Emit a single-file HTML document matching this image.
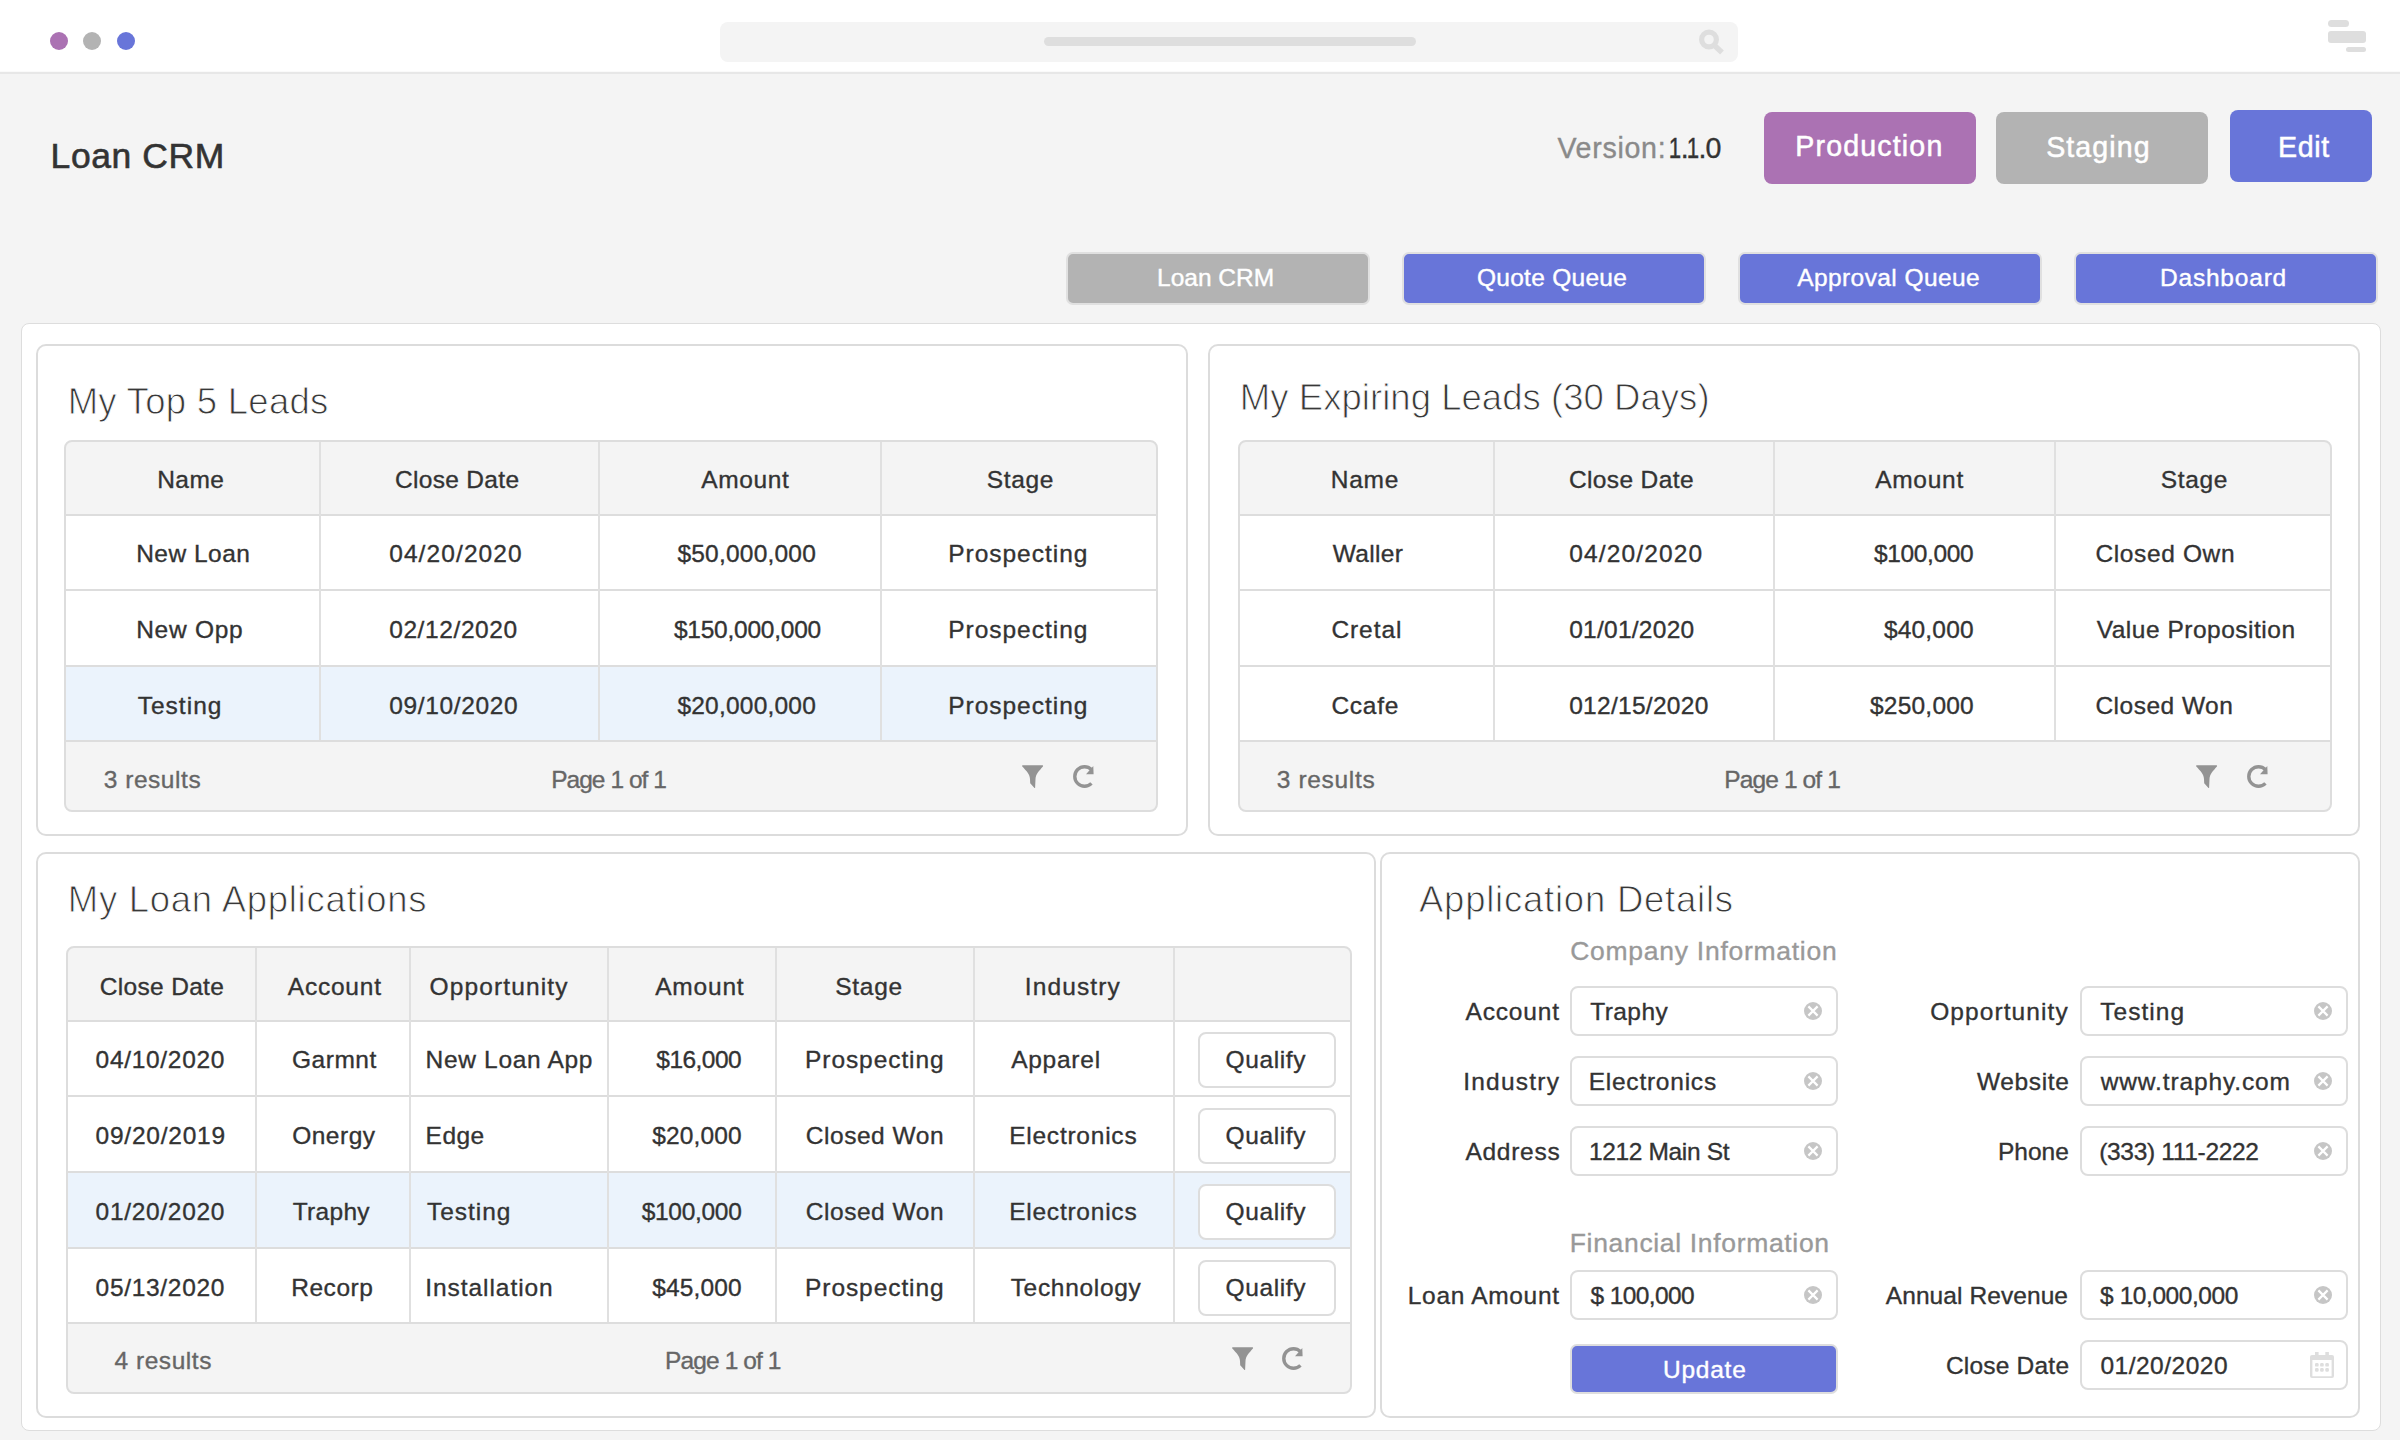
<!DOCTYPE html>
<html><head><meta charset="utf-8"><title>Loan CRM</title>
<style>
html,body{margin:0;padding:0;}
body{width:2400px;height:1440px;overflow:hidden;background:#f4f4f4;position:relative;font-family:"Liberation Sans",sans-serif;}
.t{position:absolute;white-space:nowrap;line-height:1;}
.r{position:absolute;display:block;}
</style></head><body>
<div class="r" style="left:0px;top:0px;width:2400px;height:71px;background:#ffffff;border-radius:0px;"></div>
<div class="r" style="left:0px;top:71px;width:2400px;height:1px;background:#fafafa;border-radius:0px;"></div>
<div class="r" style="left:0px;top:72px;width:2400px;height:2px;background:#e7e7e7;border-radius:0px;"></div>
<div class="r" style="left:50px;top:32px;width:18px;height:18px;border-radius:50%;background:#ab72b3"></div>
<div class="r" style="left:83.4px;top:32px;width:18px;height:18px;border-radius:50%;background:#b3b3b3"></div>
<div class="r" style="left:117px;top:32px;width:18px;height:18px;border-radius:50%;background:#6875d9"></div>
<div class="r" style="left:720px;top:22px;width:1018px;height:40px;background:#f4f4f4;border-radius:8px;"></div>
<div class="r" style="left:1044px;top:37px;width:372px;height:9px;background:#dedede;border-radius:5px;"></div>
<svg class="r" style="left:1690px;top:22px" width="40" height="40" viewBox="0 0 40 40"><circle cx="19" cy="17.5" r="7.4" fill="none" stroke="#dedede" stroke-width="5.2"/><line x1="24.5" y1="23.5" x2="32" y2="30.5" stroke="#dedede" stroke-width="5.5"/></svg>
<div class="r" style="left:2328px;top:20px;width:21px;height:7px;background:#dedede;border-radius:3.5px;"></div>
<div class="r" style="left:2328px;top:31px;width:38px;height:12px;background:#dedede;border-radius:3px;"></div>
<div class="r" style="left:2346px;top:47px;width:20px;height:5px;background:#dedede;border-radius:2.5px;"></div>
<div class="t" style="left:50.55px;top:139px;font-size:35.5px;letter-spacing:0.586px;color:#333333;-webkit-text-stroke:0.6px #333333;">Loan CRM</div>
<div class="t" style="left:1557.42px;top:134px;font-size:28.6px;letter-spacing:0.707px;color:#8a8a8a;-webkit-text-stroke:0.35px #8a8a8a;">Version:</div>
<div class="t" style="left:1667.17px;top:134px;font-size:28.6px;letter-spacing:0.000px;color:#333333;-webkit-text-stroke:0.35px #333333;transform:scaleX(0.78);transform-origin:50% 50%;">1</div>
<div class="t" style="left:1680.82px;top:134px;font-size:28.6px;letter-spacing:0.000px;color:#333333;-webkit-text-stroke:0.35px #333333;">.</div>
<div class="t" style="left:1685.17px;top:134px;font-size:28.6px;letter-spacing:0.000px;color:#333333;-webkit-text-stroke:0.35px #333333;transform:scaleX(0.78);transform-origin:50% 50%;">1</div>
<div class="t" style="left:1698.52px;top:134px;font-size:28.6px;letter-spacing:0.000px;color:#333333;-webkit-text-stroke:0.35px #333333;">.</div>
<div class="t" style="left:1705.55px;top:134px;font-size:28.6px;letter-spacing:0.000px;color:#333333;-webkit-text-stroke:0.35px #333333;">0</div>
<div class="r" style="left:1764px;top:112px;width:212px;height:72px;background:#ab72b3;border-radius:8px;"></div>
<div class="t" style="left:1795.35px;top:132px;font-size:28.6px;letter-spacing:1.139px;color:#ffffff;-webkit-text-stroke:0.5px #ffffff;">Production</div>
<div class="r" style="left:1996px;top:112px;width:212px;height:72px;background:#b3b3b3;border-radius:8px;"></div>
<div class="t" style="left:2046.25px;top:133px;font-size:28.6px;letter-spacing:1.050px;color:#ffffff;-webkit-text-stroke:0.5px #ffffff;">Staging</div>
<div class="r" style="left:2230px;top:110px;width:142px;height:72px;background:#6875d9;border-radius:8px;"></div>
<div class="t" style="left:2278.05px;top:133px;font-size:28.6px;letter-spacing:0.650px;color:#ffffff;-webkit-text-stroke:0.5px #ffffff;">Edit</div>
<div class="r" style="left:1066px;top:252px;width:304px;height:53px;background:#b3b3b3;border:2px solid #e0e0e0;box-sizing:border-box;border-radius:7px;"></div>
<div class="t" style="left:1157.00px;top:266px;font-size:24.5px;letter-spacing:0.007px;color:#ffffff;-webkit-text-stroke:0.4px #ffffff;">Loan CRM</div>
<div class="r" style="left:1402px;top:252px;width:304px;height:53px;background:#6875d9;border:2px solid #e0e0e0;box-sizing:border-box;border-radius:7px;"></div>
<div class="t" style="left:1476.90px;top:266px;font-size:24.5px;letter-spacing:0.290px;color:#ffffff;-webkit-text-stroke:0.4px #ffffff;">Quote Queue</div>
<div class="r" style="left:1738px;top:252px;width:304px;height:53px;background:#6875d9;border:2px solid #e0e0e0;box-sizing:border-box;border-radius:7px;"></div>
<div class="t" style="left:1797.20px;top:266px;font-size:24.5px;letter-spacing:0.415px;color:#ffffff;-webkit-text-stroke:0.4px #ffffff;">Approval Queue</div>
<div class="r" style="left:2074px;top:252px;width:304px;height:53px;background:#6875d9;border:2px solid #e0e0e0;box-sizing:border-box;border-radius:7px;"></div>
<div class="t" style="left:2160.00px;top:266px;font-size:24.5px;letter-spacing:0.794px;color:#ffffff;-webkit-text-stroke:0.4px #ffffff;">Dashboard</div>
<div class="r" style="left:21px;top:323px;width:2360px;height:1108px;background:#ffffff;border:1px solid #dddddd;box-sizing:border-box;border-radius:8px;"></div>
<div class="r" style="left:36px;top:344px;width:1152px;height:492px;background:#ffffff;border:2px solid #dcdcdc;box-sizing:border-box;border-radius:10px;"></div>
<div class="r" style="left:1208px;top:344px;width:1152px;height:492px;background:#ffffff;border:2px solid #dcdcdc;box-sizing:border-box;border-radius:10px;"></div>
<div class="r" style="left:36px;top:852px;width:1340px;height:566px;background:#ffffff;border:2px solid #dcdcdc;box-sizing:border-box;border-radius:10px;"></div>
<div class="r" style="left:1380px;top:852px;width:980px;height:566px;background:#ffffff;border:2px solid #dcdcdc;box-sizing:border-box;border-radius:10px;"></div>
<div class="r" style="left:64px;top:440px;width:1094px;height:372px;background:#f4f4f4;border:2px solid #dddddd;box-sizing:border-box;border-radius:8px;"></div>
<div class="r" style="left:66px;top:515px;width:1090px;height:75px;background:#ffffff;border-radius:0px;"></div>
<div class="r" style="left:66px;top:590px;width:1090px;height:76px;background:#ffffff;border-radius:0px;"></div>
<div class="r" style="left:66px;top:666px;width:1090px;height:75px;background:#ebf3fc;border-radius:0px;"></div>
<div class="r" style="left:66px;top:514px;width:1090px;height:2px;background:#dddddd;border-radius:0px;"></div>
<div class="r" style="left:66px;top:589px;width:1090px;height:2px;background:#dddddd;border-radius:0px;"></div>
<div class="r" style="left:66px;top:665px;width:1090px;height:2px;background:#dddddd;border-radius:0px;"></div>
<div class="r" style="left:66px;top:740px;width:1090px;height:2px;background:#dddddd;border-radius:0px;"></div>
<div class="r" style="left:319px;top:442px;width:2px;height:298px;background:#e0e0e0;border-radius:0px;"></div>
<div class="r" style="left:598px;top:442px;width:2px;height:298px;background:#e0e0e0;border-radius:0px;"></div>
<div class="r" style="left:880px;top:442px;width:2px;height:298px;background:#e0e0e0;border-radius:0px;"></div>
<div class="r" style="left:1238px;top:440px;width:1094px;height:372px;background:#f4f4f4;border:2px solid #dddddd;box-sizing:border-box;border-radius:8px;"></div>
<div class="r" style="left:1240px;top:515px;width:1090px;height:75px;background:#ffffff;border-radius:0px;"></div>
<div class="r" style="left:1240px;top:590px;width:1090px;height:76px;background:#ffffff;border-radius:0px;"></div>
<div class="r" style="left:1240px;top:666px;width:1090px;height:75px;background:#ffffff;border-radius:0px;"></div>
<div class="r" style="left:1240px;top:514px;width:1090px;height:2px;background:#dddddd;border-radius:0px;"></div>
<div class="r" style="left:1240px;top:589px;width:1090px;height:2px;background:#dddddd;border-radius:0px;"></div>
<div class="r" style="left:1240px;top:665px;width:1090px;height:2px;background:#dddddd;border-radius:0px;"></div>
<div class="r" style="left:1240px;top:740px;width:1090px;height:2px;background:#dddddd;border-radius:0px;"></div>
<div class="r" style="left:1493px;top:442px;width:2px;height:298px;background:#e0e0e0;border-radius:0px;"></div>
<div class="r" style="left:1773px;top:442px;width:2px;height:298px;background:#e0e0e0;border-radius:0px;"></div>
<div class="r" style="left:2054px;top:442px;width:2px;height:298px;background:#e0e0e0;border-radius:0px;"></div>
<div class="r" style="left:66px;top:946px;width:1286px;height:448px;background:#f4f4f4;border:2px solid #dddddd;box-sizing:border-box;border-radius:8px;"></div>
<div class="r" style="left:68px;top:1021px;width:1282px;height:75px;background:#ffffff;border-radius:0px;"></div>
<div class="r" style="left:68px;top:1096px;width:1282px;height:76px;background:#ffffff;border-radius:0px;"></div>
<div class="r" style="left:68px;top:1172px;width:1282px;height:76px;background:#ebf3fc;border-radius:0px;"></div>
<div class="r" style="left:68px;top:1248px;width:1282px;height:75px;background:#ffffff;border-radius:0px;"></div>
<div class="r" style="left:68px;top:1020px;width:1282px;height:2px;background:#dddddd;border-radius:0px;"></div>
<div class="r" style="left:68px;top:1095px;width:1282px;height:2px;background:#dddddd;border-radius:0px;"></div>
<div class="r" style="left:68px;top:1171px;width:1282px;height:2px;background:#dddddd;border-radius:0px;"></div>
<div class="r" style="left:68px;top:1247px;width:1282px;height:2px;background:#dddddd;border-radius:0px;"></div>
<div class="r" style="left:68px;top:1322px;width:1282px;height:2px;background:#dddddd;border-radius:0px;"></div>
<div class="r" style="left:255px;top:948px;width:2px;height:374px;background:#e0e0e0;border-radius:0px;"></div>
<div class="r" style="left:409px;top:948px;width:2px;height:374px;background:#e0e0e0;border-radius:0px;"></div>
<div class="r" style="left:607px;top:948px;width:2px;height:374px;background:#e0e0e0;border-radius:0px;"></div>
<div class="r" style="left:775px;top:948px;width:2px;height:374px;background:#e0e0e0;border-radius:0px;"></div>
<div class="r" style="left:973px;top:948px;width:2px;height:374px;background:#e0e0e0;border-radius:0px;"></div>
<div class="r" style="left:1173px;top:948px;width:2px;height:374px;background:#e0e0e0;border-radius:0px;"></div>
<div class="t" style="left:67.65px;top:384px;font-size:36.5px;letter-spacing:0.281px;color:#383838;-webkit-text-stroke:0.9px #ffffff;">My Top 5 Leads</div>
<div class="t" style="left:1239.85px;top:380px;font-size:36.5px;letter-spacing:0.042px;color:#383838;-webkit-text-stroke:0.9px #ffffff;">My Expiring Leads (30 Days)</div>
<div class="t" style="left:67.80px;top:882px;font-size:36.5px;letter-spacing:0.721px;color:#383838;-webkit-text-stroke:0.9px #ffffff;">My Loan Applications</div>
<div class="t" style="left:1418.95px;top:882px;font-size:36.5px;letter-spacing:0.772px;color:#383838;-webkit-text-stroke:0.9px #ffffff;">Application Details</div>
<div class="t" style="left:157.18px;top:468px;font-size:24.5px;letter-spacing:0.467px;color:#333333;-webkit-text-stroke:0.35px #333333;">Name</div>
<div class="t" style="left:394.93px;top:468px;font-size:24.5px;letter-spacing:0.322px;color:#333333;-webkit-text-stroke:0.35px #333333;">Close Date</div>
<div class="t" style="left:701.17px;top:468px;font-size:24.5px;letter-spacing:0.630px;color:#333333;-webkit-text-stroke:0.35px #333333;">Amount</div>
<div class="t" style="left:986.67px;top:468px;font-size:24.5px;letter-spacing:0.662px;color:#333333;-webkit-text-stroke:0.35px #333333;">Stage</div>
<div class="t" style="left:136.18px;top:542px;font-size:24.5px;letter-spacing:0.486px;color:#333333;-webkit-text-stroke:0.35px #333333;">New Loan</div>
<div class="t" style="left:389.18px;top:542px;font-size:24.5px;letter-spacing:1.100px;color:#333333;-webkit-text-stroke:0.35px #333333;">04/20/2020</div>
<div class="t" style="left:677.42px;top:542px;font-size:24.5px;letter-spacing:0.215px;color:#333333;-webkit-text-stroke:0.35px #333333;">$50,000,000</div>
<div class="t" style="left:948.17px;top:542px;font-size:24.5px;letter-spacing:0.990px;color:#333333;-webkit-text-stroke:0.35px #333333;">Prospecting</div>
<div class="t" style="left:136.18px;top:618px;font-size:24.5px;letter-spacing:0.733px;color:#333333;-webkit-text-stroke:0.35px #333333;">New Opp</div>
<div class="t" style="left:389.18px;top:618px;font-size:24.5px;letter-spacing:0.600px;color:#333333;-webkit-text-stroke:0.35px #333333;">02/12/2020</div>
<div class="t" style="left:673.92px;top:618px;font-size:24.5px;letter-spacing:-0.236px;color:#333333;-webkit-text-stroke:0.35px #333333;">$150,000,000</div>
<div class="t" style="left:948.17px;top:618px;font-size:24.5px;letter-spacing:0.990px;color:#333333;-webkit-text-stroke:0.35px #333333;">Prospecting</div>
<div class="t" style="left:137.68px;top:694px;font-size:24.5px;letter-spacing:1.025px;color:#333333;-webkit-text-stroke:0.35px #333333;">Testing</div>
<div class="t" style="left:389.18px;top:694px;font-size:24.5px;letter-spacing:0.656px;color:#333333;-webkit-text-stroke:0.35px #333333;">09/10/2020</div>
<div class="t" style="left:677.42px;top:694px;font-size:24.5px;letter-spacing:0.215px;color:#333333;-webkit-text-stroke:0.35px #333333;">$20,000,000</div>
<div class="t" style="left:948.17px;top:694px;font-size:24.5px;letter-spacing:0.990px;color:#333333;-webkit-text-stroke:0.35px #333333;">Prospecting</div>
<div class="t" style="left:103.67px;top:768px;font-size:24.5px;letter-spacing:0.550px;color:#666666;-webkit-text-stroke:0.35px #666666;">3 results</div>
<div class="t" style="left:551.17px;top:768px;font-size:24.5px;letter-spacing:-0.960px;color:#666666;-webkit-text-stroke:0.35px #666666;">Page 1 of 1</div>
<div class="t" style="left:1330.67px;top:468px;font-size:24.5px;letter-spacing:0.800px;color:#333333;-webkit-text-stroke:0.35px #333333;">Name</div>
<div class="t" style="left:1568.92px;top:468px;font-size:24.5px;letter-spacing:0.378px;color:#333333;-webkit-text-stroke:0.35px #333333;">Close Date</div>
<div class="t" style="left:1875.17px;top:468px;font-size:24.5px;letter-spacing:0.730px;color:#333333;-webkit-text-stroke:0.35px #333333;">Amount</div>
<div class="t" style="left:2160.68px;top:468px;font-size:24.5px;letter-spacing:0.662px;color:#333333;-webkit-text-stroke:0.35px #333333;">Stage</div>
<div class="t" style="left:1332.67px;top:542px;font-size:24.5px;letter-spacing:0.330px;color:#333333;-webkit-text-stroke:0.35px #333333;">Waller</div>
<div class="t" style="left:1569.17px;top:542px;font-size:24.5px;letter-spacing:1.156px;color:#333333;-webkit-text-stroke:0.35px #333333;">04/20/2020</div>
<div class="t" style="left:1873.92px;top:542px;font-size:24.5px;letter-spacing:-0.336px;color:#333333;-webkit-text-stroke:0.35px #333333;">$100,000</div>
<div class="t" style="left:2095.43px;top:542px;font-size:24.5px;letter-spacing:0.628px;color:#333333;-webkit-text-stroke:0.35px #333333;">Closed Own</div>
<div class="t" style="left:1331.42px;top:618px;font-size:24.5px;letter-spacing:0.930px;color:#333333;-webkit-text-stroke:0.35px #333333;">Cretal</div>
<div class="t" style="left:1569.17px;top:618px;font-size:24.5px;letter-spacing:0.267px;color:#333333;-webkit-text-stroke:0.35px #333333;">01/01/2020</div>
<div class="t" style="left:1883.92px;top:618px;font-size:24.5px;letter-spacing:0.192px;color:#333333;-webkit-text-stroke:0.35px #333333;">$40,000</div>
<div class="t" style="left:2096.68px;top:618px;font-size:24.5px;letter-spacing:0.509px;color:#333333;-webkit-text-stroke:0.35px #333333;">Value Proposition</div>
<div class="t" style="left:1331.42px;top:694px;font-size:24.5px;letter-spacing:0.725px;color:#333333;-webkit-text-stroke:0.35px #333333;">Ccafe</div>
<div class="t" style="left:1569.17px;top:694px;font-size:24.5px;letter-spacing:0.290px;color:#333333;-webkit-text-stroke:0.35px #333333;">012/15/2020</div>
<div class="t" style="left:1869.92px;top:694px;font-size:24.5px;letter-spacing:0.236px;color:#333333;-webkit-text-stroke:0.35px #333333;">$250,000</div>
<div class="t" style="left:2095.43px;top:694px;font-size:24.5px;letter-spacing:0.489px;color:#333333;-webkit-text-stroke:0.35px #333333;">Closed Won</div>
<div class="t" style="left:1276.67px;top:768px;font-size:24.5px;letter-spacing:0.675px;color:#666666;-webkit-text-stroke:0.35px #666666;">3 results</div>
<div class="t" style="left:1724.17px;top:768px;font-size:24.5px;letter-spacing:-0.860px;color:#666666;-webkit-text-stroke:0.35px #666666;">Page 1 of 1</div>
<div class="t" style="left:99.83px;top:975px;font-size:24.5px;letter-spacing:0.311px;color:#333333;-webkit-text-stroke:0.35px #333333;">Close Date</div>
<div class="t" style="left:287.78px;top:975px;font-size:24.5px;letter-spacing:0.775px;color:#333333;-webkit-text-stroke:0.35px #333333;">Account</div>
<div class="t" style="left:429.57px;top:975px;font-size:24.5px;letter-spacing:1.130px;color:#333333;-webkit-text-stroke:0.35px #333333;">Opportunity</div>
<div class="t" style="left:655.17px;top:975px;font-size:24.5px;letter-spacing:0.810px;color:#333333;-webkit-text-stroke:0.35px #333333;">Amount</div>
<div class="t" style="left:835.17px;top:975px;font-size:24.5px;letter-spacing:0.762px;color:#333333;-webkit-text-stroke:0.35px #333333;">Stage</div>
<div class="t" style="left:1024.72px;top:975px;font-size:24.5px;letter-spacing:1.121px;color:#333333;-webkit-text-stroke:0.35px #333333;">Industry</div>
<div class="t" style="left:95.58px;top:1048px;font-size:24.5px;letter-spacing:0.689px;color:#333333;-webkit-text-stroke:0.35px #333333;">04/10/2020</div>
<div class="t" style="left:291.93px;top:1048px;font-size:24.5px;letter-spacing:0.550px;color:#333333;-webkit-text-stroke:0.35px #333333;">Garmnt</div>
<div class="t" style="left:425.57px;top:1048px;font-size:24.5px;letter-spacing:0.677px;color:#333333;-webkit-text-stroke:0.35px #333333;">New Loan App</div>
<div class="t" style="left:656.32px;top:1048px;font-size:24.5px;letter-spacing:-0.542px;color:#333333;-webkit-text-stroke:0.35px #333333;">$16,000</div>
<div class="t" style="left:805.07px;top:1048px;font-size:24.5px;letter-spacing:0.920px;color:#333333;-webkit-text-stroke:0.35px #333333;">Prospecting</div>
<div class="t" style="left:1011.17px;top:1048px;font-size:24.5px;letter-spacing:0.750px;color:#333333;-webkit-text-stroke:0.35px #333333;">Apparel</div>
<div class="r" style="left:1198px;top:1032px;width:138px;height:56px;background:#ffffff;border:2px solid #dddddd;box-sizing:border-box;border-radius:8px;"></div>
<div class="t" style="left:1225.58px;top:1048px;font-size:24.5px;letter-spacing:0.617px;color:#333333;-webkit-text-stroke:0.35px #333333;">Qualify</div>
<div class="t" style="left:95.58px;top:1124px;font-size:24.5px;letter-spacing:0.772px;color:#333333;-webkit-text-stroke:0.35px #333333;">09/20/2019</div>
<div class="t" style="left:292.18px;top:1124px;font-size:24.5px;letter-spacing:0.500px;color:#333333;-webkit-text-stroke:0.35px #333333;">Onergy</div>
<div class="t" style="left:425.57px;top:1124px;font-size:24.5px;letter-spacing:0.483px;color:#333333;-webkit-text-stroke:0.35px #333333;">Edge</div>
<div class="t" style="left:652.22px;top:1124px;font-size:24.5px;letter-spacing:0.142px;color:#333333;-webkit-text-stroke:0.35px #333333;">$20,000</div>
<div class="t" style="left:805.82px;top:1124px;font-size:24.5px;letter-spacing:0.522px;color:#333333;-webkit-text-stroke:0.35px #333333;">Closed Won</div>
<div class="t" style="left:1009.17px;top:1124px;font-size:24.5px;letter-spacing:0.765px;color:#333333;-webkit-text-stroke:0.35px #333333;">Electronics</div>
<div class="r" style="left:1198px;top:1108px;width:138px;height:56px;background:#ffffff;border:2px solid #dddddd;box-sizing:border-box;border-radius:8px;"></div>
<div class="t" style="left:1225.58px;top:1124px;font-size:24.5px;letter-spacing:0.617px;color:#333333;-webkit-text-stroke:0.35px #333333;">Qualify</div>
<div class="t" style="left:95.58px;top:1200px;font-size:24.5px;letter-spacing:0.689px;color:#333333;-webkit-text-stroke:0.35px #333333;">01/20/2020</div>
<div class="t" style="left:292.68px;top:1200px;font-size:24.5px;letter-spacing:0.320px;color:#333333;-webkit-text-stroke:0.35px #333333;">Traphy</div>
<div class="t" style="left:427.07px;top:1200px;font-size:24.5px;letter-spacing:0.942px;color:#333333;-webkit-text-stroke:0.35px #333333;">Testing</div>
<div class="t" style="left:641.72px;top:1200px;font-size:24.5px;letter-spacing:-0.307px;color:#333333;-webkit-text-stroke:0.35px #333333;">$100,000</div>
<div class="t" style="left:805.82px;top:1200px;font-size:24.5px;letter-spacing:0.522px;color:#333333;-webkit-text-stroke:0.35px #333333;">Closed Won</div>
<div class="t" style="left:1009.17px;top:1200px;font-size:24.5px;letter-spacing:0.765px;color:#333333;-webkit-text-stroke:0.35px #333333;">Electronics</div>
<div class="r" style="left:1198px;top:1184px;width:138px;height:56px;background:#ffffff;border:2px solid #dddddd;box-sizing:border-box;border-radius:8px;"></div>
<div class="t" style="left:1225.58px;top:1200px;font-size:24.5px;letter-spacing:0.617px;color:#333333;-webkit-text-stroke:0.35px #333333;">Qualify</div>
<div class="t" style="left:95.58px;top:1276px;font-size:24.5px;letter-spacing:0.689px;color:#333333;-webkit-text-stroke:0.35px #333333;">05/13/2020</div>
<div class="t" style="left:291.18px;top:1276px;font-size:24.5px;letter-spacing:0.550px;color:#333333;-webkit-text-stroke:0.35px #333333;">Recorp</div>
<div class="t" style="left:425.32px;top:1276px;font-size:24.5px;letter-spacing:0.936px;color:#333333;-webkit-text-stroke:0.35px #333333;">Installation</div>
<div class="t" style="left:652.22px;top:1276px;font-size:24.5px;letter-spacing:0.142px;color:#333333;-webkit-text-stroke:0.35px #333333;">$45,000</div>
<div class="t" style="left:805.07px;top:1276px;font-size:24.5px;letter-spacing:0.920px;color:#333333;-webkit-text-stroke:0.35px #333333;">Prospecting</div>
<div class="t" style="left:1010.67px;top:1276px;font-size:24.5px;letter-spacing:0.683px;color:#333333;-webkit-text-stroke:0.35px #333333;">Technology</div>
<div class="r" style="left:1198px;top:1260px;width:138px;height:56px;background:#ffffff;border:2px solid #dddddd;box-sizing:border-box;border-radius:8px;"></div>
<div class="t" style="left:1225.58px;top:1276px;font-size:24.5px;letter-spacing:0.617px;color:#333333;-webkit-text-stroke:0.35px #333333;">Qualify</div>
<div class="t" style="left:114.38px;top:1349px;font-size:24.5px;letter-spacing:0.563px;color:#666666;-webkit-text-stroke:0.35px #666666;">4 results</div>
<div class="t" style="left:665.07px;top:1349px;font-size:24.5px;letter-spacing:-0.890px;color:#666666;-webkit-text-stroke:0.35px #666666;">Page 1 of 1</div>
<svg class="r" style="left:1022px;top:765px" width="22" height="24" viewBox="0 0 22 24"><path d="M0.6 0.3H20.6Q21.4 0.6 20.9 1.5C17.2 6 13.7 9 13.5 14L13.1 23H12.5L8.2 18.2L8 14C7.8 9 4.3 6 0.3 1.5Q-0.2 0.6 0.6 0.3Z" fill="#939393"/></svg>
<svg class="r" style="left:1073px;top:765px" width="22" height="24" viewBox="0 0 22 24"><path d="M18.44 18.34A9.75 9.75 0 1 1 18.44 4.56" fill="none" stroke="#939393" stroke-width="3.4"/><path d="M20.3 1L20.6 9.3L13 9.3Z" fill="#939393"/></svg>
<svg class="r" style="left:2196px;top:765px" width="22" height="24" viewBox="0 0 22 24"><path d="M0.6 0.3H20.6Q21.4 0.6 20.9 1.5C17.2 6 13.7 9 13.5 14L13.1 23H12.5L8.2 18.2L8 14C7.8 9 4.3 6 0.3 1.5Q-0.2 0.6 0.6 0.3Z" fill="#939393"/></svg>
<svg class="r" style="left:2247px;top:765px" width="22" height="24" viewBox="0 0 22 24"><path d="M18.44 18.34A9.75 9.75 0 1 1 18.44 4.56" fill="none" stroke="#939393" stroke-width="3.4"/><path d="M20.3 1L20.6 9.3L13 9.3Z" fill="#939393"/></svg>
<svg class="r" style="left:1232px;top:1347px" width="22" height="24" viewBox="0 0 22 24"><path d="M0.6 0.3H20.6Q21.4 0.6 20.9 1.5C17.2 6 13.7 9 13.5 14L13.1 23H12.5L8.2 18.2L8 14C7.8 9 4.3 6 0.3 1.5Q-0.2 0.6 0.6 0.3Z" fill="#939393"/></svg>
<svg class="r" style="left:1282px;top:1347px" width="22" height="24" viewBox="0 0 22 24"><path d="M18.44 18.34A9.75 9.75 0 1 1 18.44 4.56" fill="none" stroke="#939393" stroke-width="3.4"/><path d="M20.3 1L20.6 9.3L13 9.3Z" fill="#939393"/></svg>
<div class="t" style="left:1570.22px;top:938px;font-size:26.5px;letter-spacing:0.728px;color:#999999;-webkit-text-stroke:0.35px #999999;">Company Information</div>
<div class="t" style="left:1569.77px;top:1230px;font-size:26.5px;letter-spacing:0.665px;color:#999999;-webkit-text-stroke:0.35px #999999;">Financial Information</div>
<div class="t" style="left:1465.47px;top:1000px;font-size:24.5px;letter-spacing:0.842px;color:#333333;-webkit-text-stroke:0.35px #333333;">Account</div>
<div class="r" style="left:1570px;top:986px;width:268px;height:50px;background:#ffffff;border:2px solid #dddddd;box-sizing:border-box;border-radius:8px;"></div>
<div class="t" style="left:1590.17px;top:1000px;font-size:24.5px;letter-spacing:0.440px;color:#333333;-webkit-text-stroke:0.35px #333333;">Traphy</div>
<svg class="r" style="left:1803px;top:1001.0px" width="20" height="20" viewBox="0 0 20 20"><circle cx="10" cy="10" r="9" fill="#c6c6c6"/><path d="M5.4 5.4L14.6 14.6M14.6 5.4L5.4 14.6" stroke="#ffffff" stroke-width="2.2"/></svg>
<div class="t" style="left:1930.17px;top:1000px;font-size:24.5px;letter-spacing:1.090px;color:#333333;-webkit-text-stroke:0.35px #333333;">Opportunity</div>
<div class="r" style="left:2080px;top:986px;width:268px;height:50px;background:#ffffff;border:2px solid #dddddd;box-sizing:border-box;border-radius:8px;"></div>
<div class="t" style="left:2100.18px;top:1000px;font-size:24.5px;letter-spacing:1.058px;color:#333333;-webkit-text-stroke:0.35px #333333;">Testing</div>
<svg class="r" style="left:2313px;top:1001.0px" width="20" height="20" viewBox="0 0 20 20"><circle cx="10" cy="10" r="9" fill="#c6c6c6"/><path d="M5.4 5.4L14.6 14.6M14.6 5.4L5.4 14.6" stroke="#ffffff" stroke-width="2.2"/></svg>
<div class="t" style="left:1463.22px;top:1070px;font-size:24.5px;letter-spacing:1.221px;color:#333333;-webkit-text-stroke:0.35px #333333;">Industry</div>
<div class="r" style="left:1570px;top:1056px;width:268px;height:50px;background:#ffffff;border:2px solid #dddddd;box-sizing:border-box;border-radius:8px;"></div>
<div class="t" style="left:1588.67px;top:1070px;font-size:24.5px;letter-spacing:0.765px;color:#333333;-webkit-text-stroke:0.35px #333333;">Electronics</div>
<svg class="r" style="left:1803px;top:1071.0px" width="20" height="20" viewBox="0 0 20 20"><circle cx="10" cy="10" r="9" fill="#c6c6c6"/><path d="M5.4 5.4L14.6 14.6M14.6 5.4L5.4 14.6" stroke="#ffffff" stroke-width="2.2"/></svg>
<div class="t" style="left:1976.88px;top:1070px;font-size:24.5px;letter-spacing:0.658px;color:#333333;-webkit-text-stroke:0.35px #333333;">Website</div>
<div class="r" style="left:2080px;top:1056px;width:268px;height:50px;background:#ffffff;border:2px solid #dddddd;box-sizing:border-box;border-radius:8px;"></div>
<div class="t" style="left:2100.68px;top:1070px;font-size:24.5px;letter-spacing:0.877px;color:#333333;-webkit-text-stroke:0.35px #333333;">www.traphy.com</div>
<svg class="r" style="left:2313px;top:1071.0px" width="20" height="20" viewBox="0 0 20 20"><circle cx="10" cy="10" r="9" fill="#c6c6c6"/><path d="M5.4 5.4L14.6 14.6M14.6 5.4L5.4 14.6" stroke="#ffffff" stroke-width="2.2"/></svg>
<div class="t" style="left:1465.47px;top:1140px;font-size:24.5px;letter-spacing:0.717px;color:#333333;-webkit-text-stroke:0.35px #333333;">Address</div>
<div class="r" style="left:1570px;top:1126px;width:268px;height:50px;background:#ffffff;border:2px solid #dddddd;box-sizing:border-box;border-radius:8px;"></div>
<div class="t" style="left:1588.92px;top:1140px;font-size:24.5px;letter-spacing:-0.341px;color:#333333;-webkit-text-stroke:0.35px #333333;">1212 Main St</div>
<svg class="r" style="left:1803px;top:1141.0px" width="20" height="20" viewBox="0 0 20 20"><circle cx="10" cy="10" r="9" fill="#c6c6c6"/><path d="M5.4 5.4L14.6 14.6M14.6 5.4L5.4 14.6" stroke="#ffffff" stroke-width="2.2"/></svg>
<div class="t" style="left:1997.88px;top:1140px;font-size:24.5px;letter-spacing:0.050px;color:#333333;-webkit-text-stroke:0.35px #333333;">Phone</div>
<div class="r" style="left:2080px;top:1126px;width:268px;height:50px;background:#ffffff;border:2px solid #dddddd;box-sizing:border-box;border-radius:8px;"></div>
<div class="t" style="left:2099.18px;top:1140px;font-size:24.5px;letter-spacing:-0.315px;color:#333333;-webkit-text-stroke:0.35px #333333;">(333) 111-2222</div>
<svg class="r" style="left:2313px;top:1141.0px" width="20" height="20" viewBox="0 0 20 20"><circle cx="10" cy="10" r="9" fill="#c6c6c6"/><path d="M5.4 5.4L14.6 14.6M14.6 5.4L5.4 14.6" stroke="#ffffff" stroke-width="2.2"/></svg>
<div class="t" style="left:1407.77px;top:1284px;font-size:24.5px;letter-spacing:0.690px;color:#333333;-webkit-text-stroke:0.35px #333333;">Loan Amount</div>
<div class="r" style="left:1570px;top:1270px;width:268px;height:50px;background:#ffffff;border:2px solid #dddddd;box-sizing:border-box;border-radius:8px;"></div>
<div class="t" style="left:1590.62px;top:1284px;font-size:24.5px;letter-spacing:-0.625px;color:#333333;-webkit-text-stroke:0.35px #333333;">$ 100,000</div>
<svg class="r" style="left:1803px;top:1285.0px" width="20" height="20" viewBox="0 0 20 20"><circle cx="10" cy="10" r="9" fill="#c6c6c6"/><path d="M5.4 5.4L14.6 14.6M14.6 5.4L5.4 14.6" stroke="#ffffff" stroke-width="2.2"/></svg>
<div class="t" style="left:1885.77px;top:1284px;font-size:24.5px;letter-spacing:0.081px;color:#333333;-webkit-text-stroke:0.35px #333333;">Annual Revenue</div>
<div class="r" style="left:2080px;top:1270px;width:268px;height:50px;background:#ffffff;border:2px solid #dddddd;box-sizing:border-box;border-radius:8px;"></div>
<div class="t" style="left:2100.12px;top:1284px;font-size:24.5px;letter-spacing:-0.441px;color:#333333;-webkit-text-stroke:0.35px #333333;">$ 10,000,000</div>
<svg class="r" style="left:2313px;top:1285.0px" width="20" height="20" viewBox="0 0 20 20"><circle cx="10" cy="10" r="9" fill="#c6c6c6"/><path d="M5.4 5.4L14.6 14.6M14.6 5.4L5.4 14.6" stroke="#ffffff" stroke-width="2.2"/></svg>
<div class="r" style="left:1570px;top:1344px;width:268px;height:50px;background:#6875d9;border:2px solid #dedede;box-sizing:border-box;border-radius:7px;"></div>
<div class="t" style="left:1662.95px;top:1358px;font-size:24.5px;letter-spacing:0.770px;color:#ffffff;-webkit-text-stroke:0.4px #ffffff;">Update</div>
<div class="t" style="left:1945.92px;top:1354px;font-size:24.5px;letter-spacing:0.211px;color:#333333;-webkit-text-stroke:0.35px #333333;">Close Date</div>
<div class="r" style="left:2080px;top:1340px;width:268px;height:50px;background:#ffffff;border:2px solid #dddddd;box-sizing:border-box;border-radius:8px;"></div>
<div class="t" style="left:2100.38px;top:1354px;font-size:24.5px;letter-spacing:0.511px;color:#333333;-webkit-text-stroke:0.35px #333333;">01/20/2020</div>
<svg class="r" style="left:2310px;top:1352px" width="24" height="26" viewBox="0 0 24 26"><path fill-rule="evenodd" fill="#dedede" d="M2 3H22Q24 3 24 5V24Q24 26 22 26H2Q0 26 0 24V5Q0 3 2 3ZM2.4 8V24.3H21.6V8Z"/><rect x="5" y="0" width="3.6" height="4" fill="#dedede"/><rect x="15.3" y="0" width="3.6" height="4" fill="#dedede"/><g fill="#dedede"><rect x="5" y="11" width="3.6" height="3.6" rx="1.2"/><rect x="10.1" y="11" width="3.6" height="3.6" rx="1.2"/><rect x="15.3" y="11" width="3.6" height="3.6" rx="1.2"/><rect x="5" y="16.1" width="3.6" height="3.6" rx="1.2"/><rect x="10.1" y="16.1" width="3.6" height="3.6" rx="1.2"/><rect x="15.3" y="16.1" width="3.6" height="3.6" rx="1.2"/></g></svg>
</body></html>
